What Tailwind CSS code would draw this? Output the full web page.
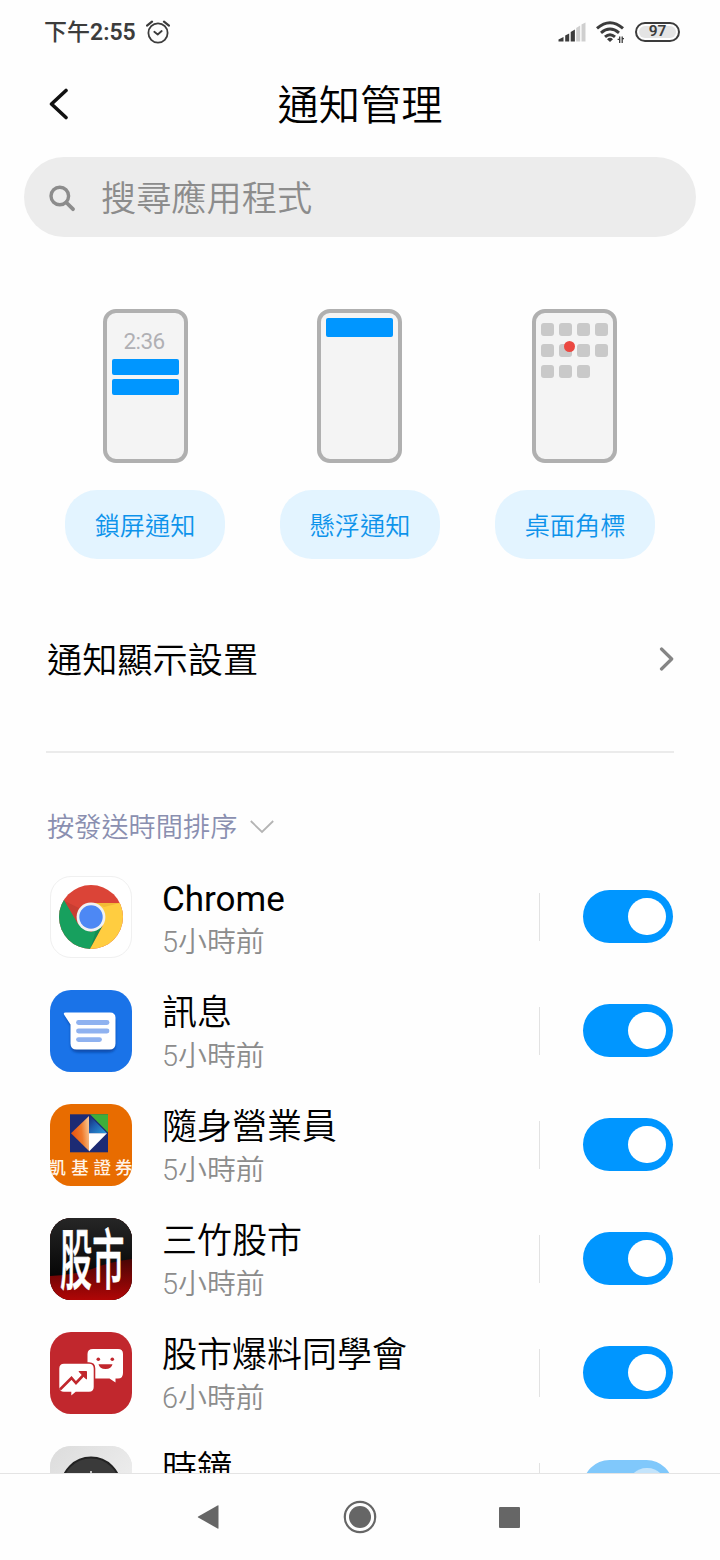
<!DOCTYPE html>
<html lang="zh-Hant">
<head>
    <meta charset="UTF-8">
    <meta name="viewport" content="width=device-width, initial-scale=1.0">
    <title>通知管理</title>
    <script src="https://cdn.jsdelivr.net/npm/@tailwindcss/browser@4"></script>
</head>
<body class="bg-[#fefefe] font-['Roboto','Noto_Sans_CJK_TC',sans-serif] text-black">
  <div class="w-[720px] h-[1560px] flex flex-col overflow-hidden">

    <!-- Status bar -->
    <div class="h-16 shrink-0 flex items-center justify-between pl-11 pr-10 text-[#3c3c3c]">
      <div class="flex items-center">
        <span class="pt-0.5 text-[23px] leading-8 font-medium">下午<span class="font-semibold">2:55</span></span>
        <svg class="ml-2.5 w-6 h-6" viewBox="0 0 24 24" fill="none" stroke="#3c3c3c" stroke-width="1.8" stroke-linecap="round" stroke-linejoin="round">
          <circle cx="12" cy="13" r="9.6" />
          <path d="M8.3 11.8l3.4 2.7 4-3.5" />
          <path d="M1 5.6L6 1.6M23 5.6L18 1.6" stroke-width="2.2" />
        </svg>
      </div>
      <div class="flex items-center">
        <svg class="w-[28px] h-5" viewBox="0 0 28 20">
          <path d="M0.5 19.5V17.5L5.5 15V19.5Z" fill="#3c3c3c" />
          <path d="M7.2 19.5V13.5L11.2 11.5V19.5Z" fill="#3c3c3c" />
          <path d="M12.7 19.5V10L16.9 7.5V19.5Z" fill="#3c3c3c" />
          <path d="M18.2 19.5V6L22.2 3.5V19.5Z" fill="#cfcfcf" />
          <path d="M23.5 19.5V2.5L27.5 0.5V19.5Z" fill="#cfcfcf" />
        </svg>
        <svg class="ml-2.5 w-7 h-[22px]" viewBox="0 0 28 22" fill="none" stroke="#3c3c3c" stroke-width="3">
          <path d="M1 7.4Q14 -4 27 7.4" />
          <path d="M5 11.8Q14 4.2 23 11.8" />
          <path d="M9 15.8Q14 11.6 19 15.8" />
          <path d="M11 18.2Q14 15.4 17 18.2L14 21Z" fill="#3c3c3c" stroke="none" />
          <path d="M23.7 15.5v6.5M21.6 18.4h2M26.2 15.5v6.5M26.2 17.6h1.8" stroke-width="1.3" />
        </svg>
        <div class="ml-[11px] w-[45px] h-5 rounded-full border-2 border-[#3c3c3c] p-[2px]">
          <div class="h-full rounded-full bg-[#e4e4e4] flex items-center justify-center text-[15.5px] leading-none font-semibold">97</div>
        </div>
      </div>
    </div>

    <!-- Header -->
    <div class="relative h-[93px] shrink-0 flex justify-center pt-[14px]">
      <svg class="absolute left-[49px] top-6 w-5 h-8" viewBox="0 0 20 32" fill="none" stroke="#111" stroke-width="3.6" stroke-linecap="round" stroke-linejoin="round">
        <path d="M17 2.5L2.5 16L17 29.5" />
      </svg>
      <h1 class="text-[41.3px] leading-[56px] font-[350]">通知管理</h1>
    </div>

    <!-- Search -->
    <div class="mx-6 h-20 shrink-0 rounded-full bg-[#ececec] flex items-center pl-[25px] text-[#8c8c8c]">
      <svg class="mt-0.5 w-[27px] h-[27px]" viewBox="0 0 27 27" fill="none" stroke="#8c8c8c" stroke-width="3.4" stroke-linecap="round">
        <circle cx="10.8" cy="11" r="8.8" />
        <path d="M17.3 17.5L24 24.2" stroke-width="3.8" />
      </svg>
      <span class="ml-[25px] pt-1 text-[35.2px] leading-[48px] font-[350]">搜尋應用程式</span>
    </div>

    <!-- Notification styles -->
    <div class="mt-[72px] px-[65px] shrink-0 flex justify-between text-[25.2px] text-[#0d93eb]">
      <div class="w-40 flex flex-col items-center">
        <div class="ml-px w-[85px] h-[154px] rounded-[13px] border-4 border-[#b0b0b0] bg-[#f4f4f4] px-[5px] pt-[13px]">
          <div class="mb-[3px] pr-[3px] text-center text-[22.5px] leading-[30px] tracking-[-0.6px] text-[#b0b0b4]">2:36</div>
          <div class="h-4 rounded-[2px] bg-[#0096ff]"></div>
          <div class="mt-1 h-4 rounded-[2px] bg-[#0096ff]"></div>
        </div>
        <button class="mt-[27px] w-40 h-[69px] pt-1 rounded-[32px] bg-[#e3f4ff] font-[350]">鎖屏通知</button>
      </div>
      <div class="w-40 flex flex-col items-center">
        <div class="mr-px w-[85px] h-[154px] rounded-[13px] border-4 border-[#b0b0b0] bg-[#f4f4f4] px-[5px] pt-[5px]">
          <div class="h-[19px] rounded-[2px] bg-[#0096ff]"></div>
        </div>
        <button class="mt-[27px] w-40 h-[69px] pt-1 rounded-[32px] bg-[#e3f4ff] font-[350]">懸浮通知</button>
      </div>
      <div class="w-40 flex flex-col items-center">
        <div class="mr-px w-[85px] h-[154px] rounded-[13px] border-4 border-[#b0b0b0] bg-[#f4f4f4] px-[5px] pt-2.5">
          <div class="relative grid grid-cols-[repeat(4,13px)] gap-x-[5px] gap-y-2">
            <i class="h-[13px] rounded-[3px] bg-[#c9c9c9]"></i>
            <i class="h-[13px] rounded-[3px] bg-[#c9c9c9]"></i>
            <i class="h-[13px] rounded-[3px] bg-[#c9c9c9]"></i>
            <i class="h-[13px] rounded-[3px] bg-[#c9c9c9]"></i>
            <i class="h-[13px] rounded-[3px] bg-[#c9c9c9]"></i>
            <i class="h-[13px] rounded-[3px] bg-[#c9c9c9]"></i>
            <i class="h-[13px] rounded-[3px] bg-[#c9c9c9]"></i>
            <i class="h-[13px] rounded-[3px] bg-[#c9c9c9]"></i>
            <i class="h-[13px] rounded-[3px] bg-[#c9c9c9]"></i>
            <i class="h-[13px] rounded-[3px] bg-[#c9c9c9]"></i>
            <i class="h-[13px] rounded-[3px] bg-[#c9c9c9]"></i>
            <span class="absolute left-[23px] top-[17.5px] w-[11px] h-[11px] rounded-full bg-[#eb4841]"></span>
          </div>
        </div>
        <button class="mt-[27px] w-40 h-[69px] pt-1 rounded-[32px] bg-[#e3f4ff] font-[350]">桌面角標</button>
      </div>
    </div>

    <!-- Display settings -->
    <div class="mt-[60px] ml-[47px] mr-[46px] h-20 shrink-0 flex items-center justify-between">
      <span class="pt-[3px] text-[35.2px] leading-[48px] font-[350]">通知顯示設置</span>
      <svg class="w-[15px] h-6" viewBox="0 0 15 24" fill="none" stroke="#858585" stroke-width="3.2" stroke-linecap="round" stroke-linejoin="round">
        <path d="M2.5 2L12.7 12L2.5 22" />
      </svg>
    </div>
    <div class="mt-[52px] mx-[46px] h-[2px] shrink-0 bg-[#ebebeb]"></div>

    <!-- Sort order -->
    <div class="mt-[54px] ml-[47px] h-10 shrink-0 flex items-center text-[#8a8fb0]">
      <span class="pt-px text-[27.2px] leading-10 font-[350]">按發送時間排序</span>
      <svg class="ml-[13px] w-6 h-[14px]" viewBox="0 0 24 14" fill="none" stroke="#b4b4b4" stroke-width="1.8">
        <path d="M0.8 1L12 12L23.2 1" />
      </svg>
    </div>

    <!-- App list -->
    <div id="app-list" class="mt-[13px] flex-1 min-h-0 overflow-hidden"></div>

    <!-- Navigation bar -->
    <div class="h-[87px] shrink-0 border-t border-[#e4e4e4] bg-[#fefefe] flex items-center justify-between pl-[197px] pr-[200px]">
      <svg class="w-[22px] h-6" viewBox="0 0 22 24" fill="#666"><path d="M21.5 0.8V23.2Q21.5 24 20.6 23.5L1.2 12.6Q0.3 12 1.2 11.4L20.6 0.5Q21.5 0 21.5 0.8Z" /></svg>
      <svg class="ml-0.5 w-[34px] h-[34px]" viewBox="0 0 34 34">
        <circle cx="17" cy="17" r="15.2" fill="none" stroke="#666" stroke-width="2.2" />
        <circle cx="17" cy="17" r="11" fill="#666" />
      </svg>
      <div class="w-[21px] h-[21px] rounded-[1px] bg-[#666]"></div>
    </div>
  </div>

  <script>
    const chromeIcon = `<svg class="w-full h-full" viewBox="1 1 80 80">
      <defs><clipPath id="chrome-disc"><circle cx="41" cy="41" r="32" /></clipPath></defs>
      <g clip-path="url(#chrome-disc)">
        <rect width="82" height="82" fill="#db4437" />
        <path d="M0 0L14 24L28 48L41 56L52.5 50L40 73L34 82H0Z" fill="#17a05e" />
        <path d="M41 27H82V82H34L40 73L52.5 50Z" fill="#ffcd40" />
        <path d="M45 27H70L54 31Z" fill="#e6a92c" opacity="0.5" />
        <path d="M14.5 25L27 46L31 33Z" fill="#8e2a22" opacity="0.25" />
        <path d="M41 71L52 51L46 54Z" fill="#0c6b3c" opacity="0.35" />
      </g>
      <circle cx="41" cy="41" r="14.4" fill="#f1f1f1" />
      <circle cx="41" cy="41" r="11.7" fill="#4d88f4" />
    </svg>`;

    const messagesIcon = `<svg class="w-full h-full" viewBox="0 0 82 82">
      <defs><filter id="soft" x="-20%" y="-20%" width="140%" height="140%"><feGaussianBlur stdDeviation="1.2" /></filter></defs>
      <path d="M14 24.5L20.5 36V55Q21 62.5 28 62.5H58Q65.5 62.5 65.5 56V29Z" fill="#0b48a5" opacity="0.85" filter="url(#soft)" />
      <path d="M15.5 22.5H60Q65.5 22.5 65.5 28V53.5Q65.5 59.5 59.5 59.5H26.5Q20.5 59.5 20.5 53.5V34.5L14 24.5Q13.2 22.5 15.5 22.5Z" fill="#fff" />
      <g stroke="#8fb2f0" stroke-width="4.8" stroke-linecap="round">
        <path d="M28.5 32.5H57" /><path d="M28.5 41H57" /><path d="M28.5 49.6H49.5" />
      </g>
    </svg>`;

    const kgiIcon = `<svg class="w-full h-full" viewBox="0 0 82 82">
      <defs>
        <linearGradient id="kgi-orange" x1="0" y1="0.6" x2="1" y2="0.4"><stop offset="0" stop-color="#e8500e" /><stop offset="0.6" stop-color="#f07a2a" /><stop offset="1" stop-color="#f8c08a" /></linearGradient>
        <linearGradient id="kgi-blue" x1="0" y1="0" x2="1" y2="1"><stop offset="0" stop-color="#16246e" /><stop offset="0.45" stop-color="#1f5fb0" /><stop offset="1" stop-color="#2ba2dc" /></linearGradient>
      </defs>
      <rect x="20" y="10.3" width="38" height="38" fill="#1c2b74" />
      <path d="M40 10.3H58V28.5Z" fill="#3fae3a" />
      <path d="M39 11L57 29.3H39Z" fill="url(#kgi-blue)" />
      <path d="M39 12V47L21 29.3Z" fill="url(#kgi-orange)" />
      <path d="M39 29.3H57L39 47.5Z" fill="#fff" />
      <text y="70" x="-1.8 21.2 43.5 65" font-size="17.5" font-weight="500" fill="#fff3e6">凱基證券</text>
    </svg>`;

    const stockIcon = `<svg class="w-full h-full" viewBox="0 0 82 82">
      <defs>
        <linearGradient id="stock-red" x1="0" y1="0" x2="0" y2="1"><stop offset="0.5" stop-color="#4a0505" /><stop offset="1" stop-color="#b00606" /></linearGradient>
        <linearGradient id="stock-black" x1="0" y1="0" x2="0" y2="1"><stop offset="0" stop-color="#262626" /><stop offset="1" stop-color="#060606" /></linearGradient>
      </defs>
      <rect width="82" height="82" fill="url(#stock-red)" />
      <path d="M0 0H82V41Q58 44 42 51Q24 57 0 58Z" fill="url(#stock-black)" />
      <text transform="translate(10 66) scale(1.02 2.1)" font-size="31.5" font-weight="500" fill="#fff" stroke="#fff" stroke-width="0.3" stroke-linejoin="round">股市</text>
    </svg>`;

    const chatIcon = `<svg class="w-full h-full" viewBox="0 0 82 82">
      <path d="M43 17H68Q73 17 73 22V41Q73 46.5 68 46.5H65.5V50.5L59.5 46.5H43Q37.5 46.5 37.5 41V22Q37.5 17 43 17Z" fill="#fff" />
      <circle cx="48.3" cy="27.3" r="1.8" fill="#c1272d" />
      <circle cx="62.3" cy="27.3" r="1.8" fill="#c1272d" />
      <path d="M48.5 32.3H62.5Q61.5 37 55.5 37Q49.5 37 48.5 32.3Z" fill="#c1272d" />
      <path d="M14 31H39Q44.5 31 44.5 36.5V55Q44.5 60.5 39 60.5H26L20.5 65V60.5H14Q8.5 60.5 8.5 55V36.5Q8.5 31 14 31Z" fill="#fff" stroke="#c1272d" stroke-width="1.6" />
      <path d="M10 57.5L21.5 46L26 51L34 42.5" fill="none" stroke="#c1272d" stroke-width="2.6" />
      <path d="M29 39.5H36.5V47L34 44.8Z" fill="#c1272d" stroke="#c1272d" />
    </svg>`;

    const clockIcon = `<svg class="w-full h-full" viewBox="0 0 82 82">
      <defs><linearGradient id="clock-bg" x1="0" x2="1" y2="1"><stop offset="0" stop-color="#dcdcdc" /><stop offset="1" stop-color="#f4f4f4" /></linearGradient></defs>
      <rect width="82" height="82" fill="url(#clock-bg)" />
      <circle cx="41" cy="41" r="29.5" fill="#3a3a3a" stroke="#222" stroke-width="2" />
      <path d="M41 25V41" stroke="#fff" stroke-width="1.4" />
    </svg>`;

    const apps = [
      { name: 'Chrome', time: '5小時前', weight: 'font-normal', bg: 'bg-white border border-[#f0f0f0]', icon: chromeIcon },
      { name: '訊息', time: '5小時前', weight: 'font-[350]', bg: 'bg-[#1a73e8]', icon: messagesIcon },
      { name: '隨身營業員', time: '5小時前', weight: 'font-[350]', bg: 'bg-[#e86c00]', icon: kgiIcon },
      { name: '三竹股市', time: '5小時前', weight: 'font-[350]', bg: 'bg-black', icon: stockIcon },
      { name: '股市爆料同學會', time: '6小時前', weight: 'font-[350]', bg: 'bg-[#c1272d]', icon: chatIcon },
      { name: '時鐘', time: '', weight: 'font-[350]', bg: 'bg-[#e4e4e4]', icon: clockIcon, locked: true },
    ];

    const list = document.getElementById('app-list');
    apps.forEach(app => {
      list.innerHTML += `<div class="h-[114px] flex items-center pl-[50px] pr-[47px]">
        <div class="w-[82px] h-[82px] shrink-0 rounded-[21px] overflow-hidden ${app.bg}">${app.icon}</div>
        <div class="ml-[30px] pt-[6px] flex-1 flex flex-col">
          <span class="text-[35px] leading-[44px] ${app.weight}">${app.name}</span>
          <span class="h-[41px] text-[28.9px] leading-[41px] font-[350] text-[#8c8c8c]">${app.time}</span>
        </div>
        <div class="w-px h-12 bg-[#e2e2e2]"></div>
        <div class="ml-[43px] mb-px w-[90px] h-[53px] rounded-full flex items-center justify-end pr-[7.5px] ${app.locked ? 'bg-[#80c8fb]' : 'bg-[#0096ff]'}">
          <div class="w-[37.5px] h-[37.5px] rounded-full ${app.locked ? 'bg-[#c4e4fb]' : 'bg-white'}"></div>
        </div>
      </div>`;
    });
  </script>
</body>
</html>
